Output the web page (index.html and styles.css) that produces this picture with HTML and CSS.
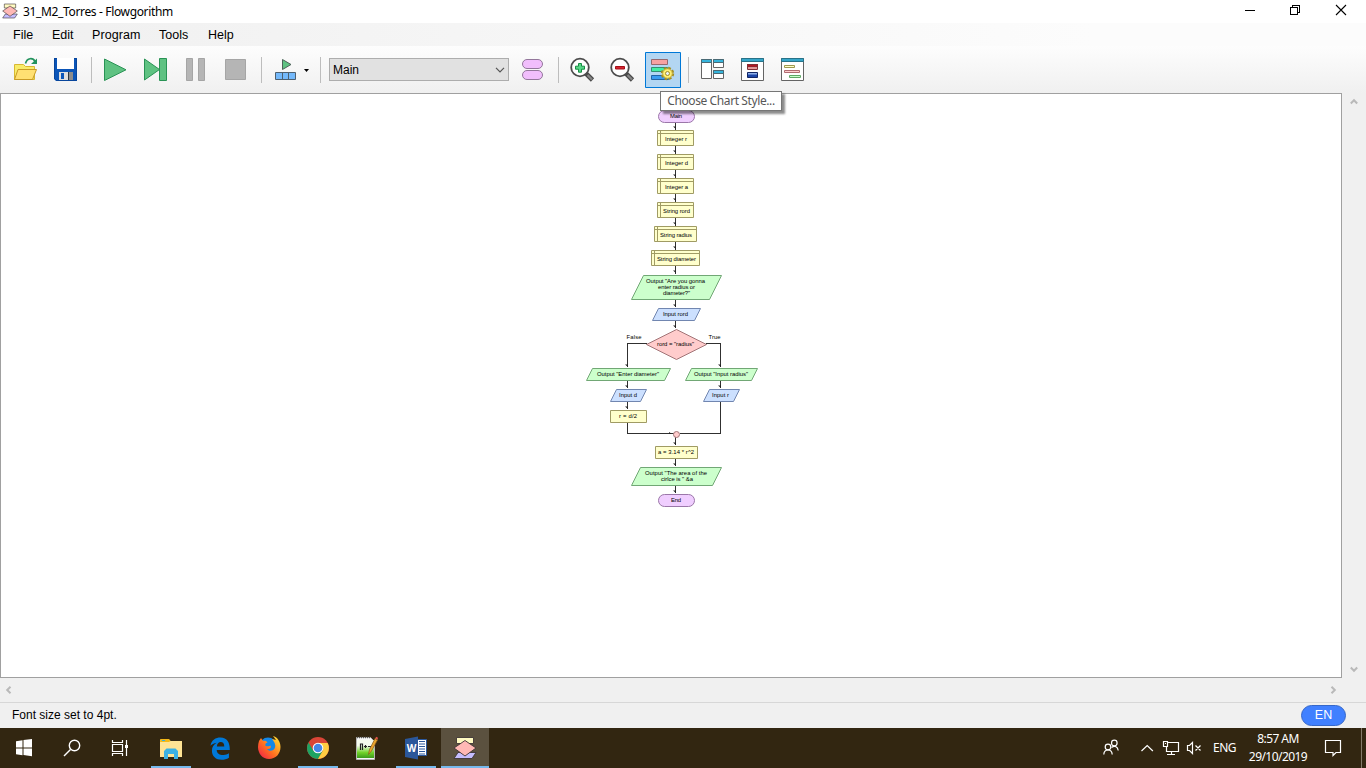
FILE: index.html
```
<!DOCTYPE html>
<html lang="en">
<head>
<meta charset="utf-8">
<title>31_M2_Torres - Flowgorithm</title>
<link rel="stylesheet" href="styles.css">
</head>
<body>
<div class="window">
  <header class="titlebar">
    <svg class="app-icon" width="16" height="16" viewBox="0 0 24 24"><use href="#flow-logo"/></svg>
    <span class="title">31_M2_Torres - Flowgorithm</span>
    <svg class="caption" width="110" height="22" viewBox="0 0 110 22" fill="none" stroke="#000" shape-rendering="crispEdges">
      <path d="M5 10.500h10M50.500 7.500h7v7h-7zM52.500 7.500v-2h7v7h-2"/>
      <path d="M96 5l10 10M106 5l-10 10" shape-rendering="auto" stroke-width="1.100"/>
    </svg>
  </header>

  <nav class="menu">
    <span class="m-file">File</span><span class="m-edit">Edit</span><span class="m-program">Program</span><span class="m-tools">Tools</span><span class="m-help">Help</span>
  </nav>

  <div class="toolbar">
    <svg class="tool" viewBox="0 0 40 40">
      <path d="M9.500 29.500v-15h9l2 2h9v13z" fill="#f8ec6a" stroke="#d9b832"/>
      <path d="M13 19.500h18.500l-4 10h-18z" fill="#ffe072" stroke="#c99b25"/>
      <path d="M20.500 13.500c1.500-6 7.500-6 9.500-2" fill="none" stroke="#23935d" stroke-width="1.700"/>
      <path d="M32 8.500v5.500h-6z" fill="#23935d"/>
    </svg>
    <svg class="tool" viewBox="0 0 40 40">
      <path d="M9 8h23v23H11l-2-2z" fill="#0b55b8"/><path d="M9.500 8.500h22v22H11.500l-2-2z" fill="none" stroke="#08459b"/>
      <path d="M12 8h17v11H12z" fill="#fff"/><path d="M14 22h13v8H14z" fill="#2d3640"/>
      <path d="M14 22h9v8h-9z" fill="#dedede"/><path d="M16 23h3v6h-3z" fill="#0b55b8"/><path d="M24 22h4v8h-4z" fill="#8c8c8c"/>
    </svg>
    <i class="sep"></i>
    <svg class="tool" viewBox="0 0 40 40"><path d="M9.500 9v21.500l21.500-10.700z" fill="#5fc282" stroke="#299355"/></svg>
    <svg class="tool" viewBox="0 0 40 40"><path d="M9.500 9v21l15-10.500z" fill="#5fc282" stroke="#299355"/><path d="M24.500 8.500h7v22h-7z" fill="#5fc282" stroke="#299355"/></svg>
    <svg class="tool" viewBox="0 0 40 40"><path d="M11.500 8.500h6v22h-6zM23.500 8.500h6v22h-6z" fill="#b5b5b5" stroke="#a5a5a5"/></svg>
    <svg class="tool" viewBox="0 0 40 40"><path d="M10.500 9.500h20v20h-20z" fill="#b5b5b5" stroke="#a5a5a5"/></svg>
    <i class="sep"></i>
    <svg class="tool tool-wide" viewBox="0 0 49 40">
      <path d="M17.500 9.500v10l8.500-5z" fill="#5fc282" stroke="#4d6359"/>
      <path d="M10.500 22.500h20v7h-20zM17.500 22.500v7M23.500 22.500v7" fill="#74b9fb" stroke="#4e6070"/>
      <path d="M39 19h5l-2.500 3z" fill="#000"/>
    </svg>
    <i class="sep"></i>
    <div class="select"><span>Main</span><svg width="10" height="6" viewBox="0 0 10 6"><path d="M1 .8l4 4 4-4" fill="none" stroke="#555" stroke-width="1.200"/></svg></div>
    <svg class="tool" viewBox="0 0 40 40" fill="#f1befc" stroke="#93779b"><rect x="10.500" y="9.500" width="20" height="9" rx="4.500"/><rect x="10.500" y="20.500" width="20" height="9" rx="4.500"/></svg>
    <i class="sep"></i>
    <svg class="tool" viewBox="0 0 40 40">
      <path d="M24 23.500l6.500 6.500" stroke="#4a4a4a" stroke-width="4.600"/><path d="M25.500 25l4.500 4.500" stroke="#858585" stroke-width="2.200"/>
      <circle cx="18" cy="17.500" r="8.800" fill="#fff" stroke="#4c4c4c" stroke-width="1.800"/>
      <path d="M16.500 13.500h3v2.700h3v3h-3v3h-3v-3h-3v-3h3z" fill="#57d987" stroke="#168c43"/>
    </svg>
    <svg class="tool" viewBox="0 0 40 40">
      <path d="M24 23.500l6.500 6.500" stroke="#4a4a4a" stroke-width="4.600"/><path d="M25.500 25l4.500 4.500" stroke="#858585" stroke-width="2.200"/>
      <circle cx="18" cy="17.500" r="8.800" fill="#fff" stroke="#4c4c4c" stroke-width="1.800"/>
      <path d="M13.500 16.500h9v2.500h-9z" fill="#d62430" stroke="#a50f18"/>
    </svg>
    <svg class="tool" viewBox="0 0 40 40">
      <path d="M3.500 2.500h35v35h-35z" fill="#b3d6f2" stroke="#0078d7"/>
      <path d="M9.500 9.500h16v5h-16z" fill="#f7a1a1" stroke="#97696d"/>
      <path d="M9.500 17.500h16v4h-16z" fill="#43efa4" stroke="#339070"/>
      <path d="M9.500 25.500h17v4h-17z" fill="#3b9cf0" stroke="#2464a3"/>
      <circle cx="25.500" cy="23.500" r="5.400" fill="none" stroke="#a18c25" stroke-width="2.600" stroke-dasharray="2.600 1.640"/>
      <circle cx="25.500" cy="23.500" r="4.800" fill="#fff173" stroke="#c2a935"/>
      <circle cx="25.500" cy="23.500" r="2" fill="#e9f2f7" stroke="#a18c25"/>
    </svg>
    <i class="sep"></i>
    <svg class="tool" viewBox="0 0 40 40">
      <path d="M9.500 9.500h10v19h-10zM21.500 9.500h10v8h-10zM21.500 20.500h10v8h-10z" fill="#fff" stroke="#646464"/>
      <path d="M9.500 9.500h10v3h-10zM21.500 9.500h10v3h-10zM21.500 20.500h10v3h-10z" fill="#35b4dc" stroke="#4a6a75"/>
    </svg>
    <svg class="tool" viewBox="0 0 40 40">
      <path d="M9.500 8.500h22v22h-22z" fill="#fff" stroke="#646464"/><path d="M9.500 8.500h22v3h-22z" fill="#35a5c8" stroke="#287389"/>
      <path d="M15 14h11v3H15z" fill="#b41520"/><path d="M15.500 14.500h10v5h-10zM15.500 17h10" fill="none" stroke="#7f3035"/><path d="M16 17.500h9v1.500h-9z" fill="#ef9a9a"/>
      <path d="M15.500 22.500h10v5h-10z" fill="#1c46a9" stroke="#122766"/><path d="M16 23h9v1.500h-9z" fill="#8eafe8"/>
    </svg>
    <svg class="tool" viewBox="0 0 40 40">
      <path d="M9.500 8.500h22v22h-22z" fill="#fff" stroke="#646464"/><path d="M9.500 8.500h22v3h-22z" fill="#35a5c8" stroke="#287389"/>
      <path d="M12.500 15.500h10v2h-10z" fill="#ffffc8" stroke="#9d984f"/><path d="M12.500 20.500h15v2h-15z" fill="#ffcece" stroke="#b06b71"/><path d="M17.500 25.500h11v2h-11z" fill="#caffcc" stroke="#60a666"/>
    </svg>
    <div class="tooltip">Choose Chart Style...</div>
  </div>

  <main class="workspace">
    <div class="canvas">
      <svg class="chart" width="1340" height="583" viewBox="1 94 1340 583">
        <g class="wire">
          <path d="M675.500 122v8M675.500 146v8M675.500 170v8M675.500 194v8M675.500 218v8M675.500 242v8M675.500 266v8M675.500 300v7M675.500 321v7"/>
          <path d="M647 343.500h-19.500v23M706 343.500h14.500v23M627.500 381v7M720.500 381v7M627.500 402v7M627.500 423v10.500h46M720.500 402v31.500h-41M675.500 437v8M675.500 459v7M675.500 486v7"/>
        </g>
        <path class="tips" d="M676 129l-3-2.500h3zM676 153l-3-2.500h3zM676 177l-3-2.500h3zM676 201l-3-2.500h3zM676 225l-3-2.500h3zM676 249l-3-2.500h3zM676 273l-3-2.500h3zM676 307l-3-2.500h3zM676 328l-3-2.500h3zM628 367l-3-2.500h3zM721 367l-3-2.500h3zM628 388l-3-2.500h3zM721 388l-3-2.500h3zM628 409l-3-2.500h3zM676 445l-3-2.500h3zM676 466l-3-2.500h3zM676 493l-3-2.500h3zM672 434l-3-2v2z"/>
        <g class="terminal"><rect x="658.500" y="110.500" width="36" height="12" rx="6"/><rect x="658.500" y="494.500" width="36" height="12" rx="6"/></g>
        <g class="process">
          <path d="M657.500 130.500h36v15h-36zM657.500 133.500h36M660.500 130.500v15"/>
          <path d="M657.500 154.500h36v15h-36zM657.500 157.500h36M660.500 154.500v15"/>
          <path d="M657.500 178.500h36v15h-36zM657.500 181.500h36M660.500 178.500v15"/>
          <path d="M657.500 202.500h36v15h-36zM657.500 205.500h36M660.500 202.500v15"/>
          <path d="M654.500 226.500h42v15h-42zM654.500 229.500h42M657.500 226.500v15"/>
          <path d="M651.500 250.500h48v15h-48zM651.500 253.500h48M654.500 250.500v15"/>
          <path d="M610.500 410.500h36v12h-36zM655.500 446.500h42v12h-42z"/>
        </g>
        <g class="output">
          <path d="M643.500 275.500h78l-12 24h-78zM592.500 368.500h78l-6 12h-78zM691.500 368.500h66l-6 12h-66zM640.500 467.500h81l-9 18h-81z"/>
        </g>
        <g class="input"><path d="M658.500 308.500h42l-6 12h-42zM616.500 389.500h30l-6 12h-30zM709.500 389.500h30l-6 12h-30z"/></g>
        <g class="branch"><path d="M676.500 329.500l30 15-30 15-30-15z"/><circle cx="676.500" cy="434.500" r="3"/></g>
        <g class="label">
          <text x="676" y="118" textLength="12">Main</text>
          <text x="676" y="141" textLength="22">Integer r</text>
          <text x="676.500" y="165" textLength="23">Integer d</text>
          <text x="676.500" y="189" textLength="23">Integer a</text>
          <text x="676.500" y="213" textLength="27">String rord</text>
          <text x="676" y="237" textLength="32">String radius</text>
          <text x="676.500" y="261" textLength="39">String diameter</text>
          <text x="675.500" y="283" textLength="59">Output "Are you gonna</text>
          <text x="676.500" y="289" textLength="37">enter radius or</text>
          <text x="676.500" y="295" textLength="27">diameter?"</text>
          <text x="675.500" y="316" textLength="25">Input rord</text>
          <text x="634" y="339" textLength="15">False</text>
          <text x="714.500" y="339" textLength="12">True</text>
          <text x="675.500" y="346" textLength="37">rord = "radius"</text>
          <text x="628" y="376" textLength="62">Output "Enter diameter"</text>
          <text x="721" y="376" textLength="54">Output "Input radius"</text>
          <text x="628" y="397" textLength="18">Input d</text>
          <text x="720.500" y="397" textLength="17">Input r</text>
          <text x="628" y="418" textLength="18">r = d/2</text>
          <text x="676" y="454" textLength="36">a = 3.14 * r^2</text>
          <text x="676" y="475" textLength="62">Output "The area of the</text>
          <text x="677" y="481" textLength="32">cirlce is " &amp;a</text>
          <text x="676" y="502" textLength="10">End</text>
        </g>
      </svg>
    </div>
    <div class="vscroll">
      <svg width="8" height="7" viewBox="0 0 8 7"><path d="M.8 5.500L4 2.200l3.200 3.300"/></svg>
      <svg width="8" height="7" viewBox="0 0 8 7"><path d="M.8 1.500L4 4.800l3.200-3.300"/></svg>
    </div>
  </main>
  <div class="hscroll">
    <svg width="7" height="8" viewBox="0 0 7 8"><path d="M5.500.8L2.200 4l3.300 3.200"/></svg>
    <svg width="7" height="8" viewBox="0 0 7 8"><path d="M1.500.8L4.800 4 1.500 7.200"/></svg>
  </div>
  <footer class="status"><span class="message">Font size set to 4pt.</span><span class="lang">EN</span></footer>

  <div class="taskbar">
    <div class="pinned">
      <div class="task"><svg viewBox="0 0 48 40" fill="#fff"><path d="M16 13.300l6.500-1v7.200H16zM23.500 12.100l8.500-1.200v8.600h-8.500zM16 20.500h6.500v6.700l-6.500-1zM23.500 20.500H32v7.700l-8.500-1.300z"/></svg></div>
      <div class="task"><svg viewBox="0 0 48 40" fill="none" stroke="#fff" stroke-width="1.400"><circle cx="26.500" cy="17.500" r="5.200"/><path d="M22.500 21.500l-6.500 6.500"/></svg></div>
      <div class="task"><svg viewBox="0 0 48 40" fill="none" stroke="#fff" stroke-width="1.200"><path d="M16.500 16.500h10v7h-10zM16.500 12v2.500h10V12M16.500 28v-2.500h10V28M30.500 12v16"/><path d="M29 17h3v3h-3z" fill="#fff" stroke="none"/></svg></div>
    </div>
    <div class="apps">
      <div class="task open"><svg viewBox="0 0 48 40"><path d="M13 12.500q0-1.500 1.500-1.500h7l2 2H35v16H13z" fill="#ffe394"/><path d="M13.500 11h8.500l1.500 2-1.500 1H13z" fill="#f4b817"/><path d="M15 12h3v1h-3z" fill="#3ab0dd"/><path d="M17 31V23l2.500-2.500h9l2.500 2.500v8h-4v-5h-6v5z" fill="#3bb1e3"/></svg></div>
      <div class="task"><svg viewBox="0 0 48 40" fill="#0078d7"><g transform="translate(1.200 1) scale(.95)"><path d="M14 17.500C15 11.500 19.500 9 24.500 9c7 0 10 5.500 9.800 13H20.500c.3 4 3.500 5.500 7.300 5.300 2-.1 4-.7 5.600-1.700v4.600c-2.300 1.500-5 2.100-7.600 2.100-6.200 0-10.300-3.600-10.300-9.500 0-4 1.900-6.700 5-8.400-3 .6-5.200 1.700-6.500 3.100zm6.700.8h7.800c0-3-1.400-4.600-3.800-4.600-2.300 0-3.700 1.700-4 4.600z"/></g></svg></div>
      <div class="task"><svg viewBox="0 0 48 40">
        <defs><linearGradient id="fox" x1="0" y1="1" x2="1" y2="0"><stop stop-color="#ed164f"/><stop offset=".45" stop-color="#ff7020"/><stop offset="1" stop-color="#ffed35"/></linearGradient></defs>
        <circle cx="23" cy="18" r="8.500" fill="#1388e8"/><path d="M14 13l2-3 2 3c2-.5 3.500 0 4.500 1.500-2 .5-2.500 1.500-2 3.500 2 .5 3.500.5 5-.5 1 2.500-.5 4-3.500 3.500 2 3 7 2 8-1.500 1-3-1-6-3-8.500l4 1-3-4c4 1 7.500 5 7.500 11 0 7-5 12-11.500 12S13 25.500 13 19c0-2 .4-4 1-6z" fill="url(#fox)"/></svg></div>
      <div class="task open"><svg viewBox="0 0 48 40">
        <circle cx="24" cy="20" r="11" fill="#da4537"/><path d="M14.500 14.500A11 11 0 0 0 24 31l4.800-8.300L24 20l-4.500 3z" fill="#1da362"/><path d="M24 31a11 11 0 0 0 9.700-16H24l4.800 7.700z" fill="#ffcd42"/><circle cx="24" cy="20" r="5.300" fill="#fff"/><circle cx="24" cy="20" r="4.300" fill="#4686e8"/></svg></div>
      <div class="task"><svg viewBox="0 0 48 40">
        <defs><linearGradient id="note" x1="0" y1="0" x2="0" y2="1"><stop offset=".3" stop-color="#f5faee"/><stop offset=".7" stop-color="#70d329"/><stop offset="1" stop-color="#3b9a1c"/></linearGradient></defs>
        <path d="M13.500 9.500h14l4 4v18h-18z" fill="#f7f7f7" stroke="#b5b5b5"/><path d="M14 12h17v18H14z" fill="url(#note)"/><path d="M14 9.500h13" stroke="#555" stroke-width="1.500" stroke-dasharray="1 1"/><path d="M17.500 22v-6h2v6M21 18.500h3M22.500 17v3M25 18.500h3" fill="none" stroke="#222" stroke-width="1.200"/><path d="M25.500 26.500l1-5 5.500-11 2.500 1.500-6 11z" fill="#e9a42d" stroke="#86591b" stroke-width=".7"/><path d="M32 10.500l2.500 1.300.5-2-1.700-1z" fill="#dc5249"/></svg></div>
      <div class="task open"><svg viewBox="0 0 48 40">
        <path d="M25 11.500h9.500v16H25z" fill="#fff" stroke="#2b579a"/><path d="M27 13.500h6M27 16h6M27 18.500h6M27 21h6M27 23.500h6M27 26h6" stroke="#2b579a"/><path d="M13 11l13-2.500v23L13 29z" fill="#2b579a"/><text class="word-w" x="19.500" y="23.500">W</text></svg></div>
      <div class="task open active"><svg viewBox="0 0 48 40"><g transform="translate(12 8)"><g id="flow-logo" stroke="#3d3436" stroke-width=".9"><path d="M3.500 1.500h17v6h-17z" fill="#fffac1"/><path d="M5 16.500h18l-4 6H1z" fill="#c5bdff"/><path d="M12 4.500L23 12l-11 8L1 12z" fill="#ffb8b5"/></g></g></svg></div>
    </div>
    <div class="tray">
      <svg width="123" height="40" viewBox="0 0 123 40" fill="none" stroke="#fff" stroke-width="1.200">
        <g transform="translate(-1090 0)"><circle cx="1108" cy="19" r="2.800"/><path d="M1103.800 26.500c.3-6 8.100-6 8.400 0"/><circle cx="1114.300" cy="15" r="2.800"/><path d="M1111.500 19.500c3.500-2.500 6.300-.5 6.700 3"/>
        <path d="M1141.500 23l5.700-5.500 5.700 5.500"/><path d="M1167.500 14.500h11v9h-12v-5M1171.500 23.500v3M1167 26.500h8M1163.500 13.500h4v5h-4zM1165 15.500h1"/>
        <path d="M1187.500 17.500h2l3-3v11l-3-3h-2zM1195.500 17.500l5 5M1200.500 17.500l-5 5"/></g>
      </svg>
      <span class="eng">ENG</span>
      <div class="clock"><span class="time">8:57 AM</span><span class="date">29/10/2019</span></div>
      <svg width="18" height="18" viewBox="0 0 18 18" class="action"><path d="M1.500 1.500h15v12H12l-3 3v-3H1.500z" fill="none" stroke="#fff" stroke-width="1.200"/></svg>
      <i class="peek"></i>
    </div>
  </div>
</div>
</body>
</html>
```
FILE: styles.css
```
* { box-sizing: border-box; }
body { margin: 0; font-family: "Liberation Sans", Arial, sans-serif; color: #000; }
svg { display: block; flex: none; }
.window { width: 1366px; height: 768px; display: flex; flex-direction: column; overflow: hidden; background: #f0f0f0; white-space: nowrap; }

.titlebar { height: 23px; display: flex; align-items: center; background: #fff; padding: 0 16px 0 2px; }
.title { font: 12px/22px "Noto Sans", sans-serif; margin-left: 5px; letter-spacing: -0.35px; }
.caption { margin-left: auto; margin-top: -1px; }
.app-icon { margin-top: -1px; }

.menu { height: 23px; display: flex; line-height: 23px; font-size: 12.5px; padding: 1px 0 0 13px; background: linear-gradient(90deg, #f0f0f0, #fcfcfc 80%); }
.menu span { flex: none; }
.m-file { width: 39px; }
.m-edit { width: 40px; }
.m-program { width: 67px; letter-spacing: 0.1px; }
.m-tools { width: 49px; }

.toolbar { position: relative; height: 47px; display: flex; align-items: flex-start; padding: 4px 0 0 5px; background: linear-gradient(#fdfdfd, #f0f0f0); }
.tool { width: 40px; height: 40px; }
.tool-wide { width: 49px; }
.sep { width: 10px; flex: none; height: 26px; margin-top: 7px; background: linear-gradient(#bdbdbd, #bdbdbd) 6px 0 / 1px 100% no-repeat; }
.select { width: 180px; height: 23px; flex: none; margin: 8px 3px 0 5px; border: 1px solid #adadad; background: #e1e1e1; display: flex; align-items: center; justify-content: space-between; padding: 0 3px; font-size: 12px; }
.tooltip { position: absolute; z-index: 2; left: 660px; top: 45px; width: 122px; height: 20px; background: #fff; border: 1px solid #767676; box-shadow: 3px 3px 2px rgba(0, 0, 0, .45); font: 12px/18px "Noto Sans", sans-serif; color: #575757; text-align: center; letter-spacing: -0.4px; }

.workspace { height: 585px; display: flex; }
.canvas { width: 1342px; border: 1px solid #a0a0a0; background: #fff; }
.vscroll { width: 24px; display: flex; flex-direction: column; align-items: center; justify-content: space-between; padding: 5px 1px 5px 0; }
.hscroll { height: 24px; display: flex; justify-content: space-between; align-items: center; padding: 0 29px 1px 5px; }
.vscroll path, .hscroll path { fill: none; stroke: #b9b9b9; stroke-width: 2; }
.status { height: 26px; display: flex; align-items: center; justify-content: space-between; border-top: 1px solid #d7d7d7; padding: 0 20px 0 12px; }
.message { font-size: 12px; line-height: 16px; margin-top: -1px; }
.lang { width: 45px; height: 21px; border: 1px solid #3567c9; border-radius: 11px; background: #4080ff; color: #fff; font-size: 12.5px; line-height: 18px; text-align: center; }

.wire { fill: none; stroke: #303030; shape-rendering: crispEdges; }
.tips { fill: #222; }
.terminal { fill: #f0ceff; stroke: #9b77a9; }
.process { fill: #ffffcc; stroke: #a09b64; }
.output { fill: #ccffcc; stroke: #71a775; }
.input { fill: #cce0ff; stroke: #7186b0; }
.branch { fill: #ffcccc; stroke: #a27477; }
.label text { font-size: 5.9px; fill: #000; text-anchor: middle; }

.taskbar { height: 40px; display: flex; background: #322611; color: #fff; }
.pinned { display: flex; width: 147px; }
.apps { display: flex; gap: 1px; }
.task { width: 48px; height: 40px; display: flex; position: relative; }
.task svg { width: 48px; height: 40px; }
.active { background: #5b513f; }
.open::after { content: ""; position: absolute; bottom: 0; left: 4px; width: 40px; height: 2px; background: #76b9ed; }
.active::after { left: 0; width: 48px; }
.word-w { font: bold 10px "Open Sans", sans-serif; fill: #fff; text-anchor: middle; }
.tray { margin-left: auto; width: 276px; display: flex; align-items: center; font: 12px "Noto Sans", sans-serif; }
.eng { width: 24px; letter-spacing: -0.5px; margin-top: -1px; }
.clock { width: 82px; display: flex; flex-direction: column; align-items: center; line-height: 18px; margin-top: -1px; }
.time, .date { letter-spacing: -0.55px; }
.action { margin: 0 0 0 5px; }
.peek { width: 1px; height: 40px; background: #837a6a; margin-left: 19px; }
```
